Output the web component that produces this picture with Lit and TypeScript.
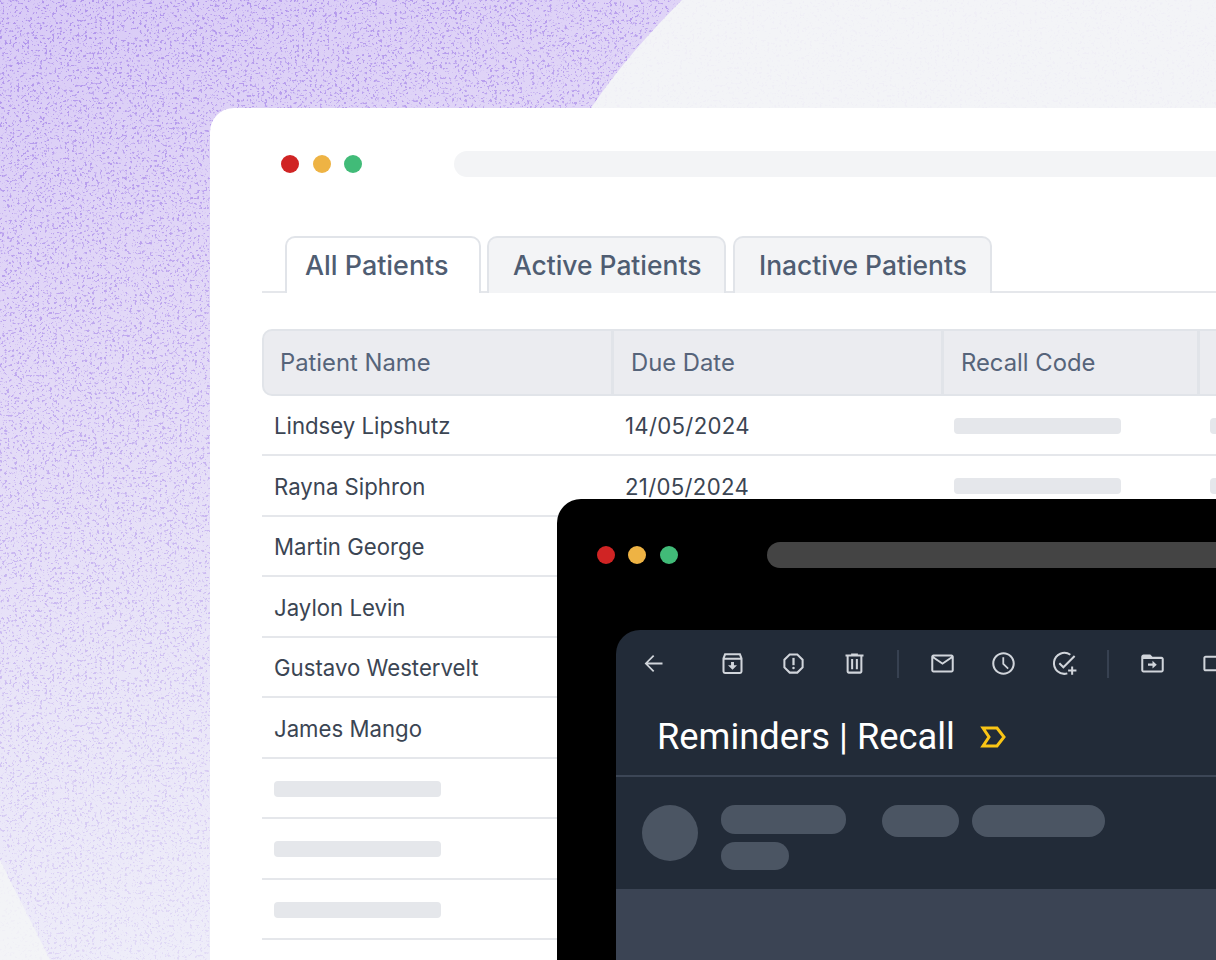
import { LitElement, html, css, svg } from "lit";
import { customElement } from "lit/decorators.js";

const BLOB = "M0 0H682C650 32 618 68 591 108L400 400V960H50C33 925 16 893 0 860Z";

const ICONS: Record<string, unknown> = {
  back: svg`<path d="M20 11.2H7.1l5.6-5.6L11.6 4.5 4.1 12l7.5 7.5 1.1-1.1-5.6-5.6H20z"/>`,
  archive: svg`<path class="st" d="M4 7.5 5.4 3.8h13.2L20 7.5v11.7c0 .7-.6 1.3-1.3 1.3H5.3c-.7 0-1.3-.6-1.3-1.3zM4 7.8h16"/><path d="M12 17.6 8 13.6h2.7v-3h2.6v3H16z"/>`,
  report: svg`<path d="M8.27 3 3 8.27v7.46L8.27 21h7.46L21 15.73V8.27L15.73 3H8.27zM19.2 15 15 19.2H9L4.8 15V9L9 4.8h6L19.2 9v6z"/><path d="M11 7h2v6.5h-2z"/><circle cx="12" cy="16" r="1.1"/>`,
  trash: svg`<path d="M15 4V3H9v1H4v1.8h1V19c0 1.1.9 2 2 2h10c1.1 0 2-.9 2-2V5.8h1V4h-5zm2.2 15c0 .1-.1.2-.2.2H7c-.1 0-.2-.1-.2-.2V5.8h10.4V19z"/><path d="M9 8h1.800v9H9zm4.200 0H15v9h-1.800z"/>`,
  mail: svg`<path d="M20 4H4c-1.100 0-2 .9-2 2v12c0 1.100.9 2 2 2h16c1.100 0 2-.9 2-2V6c0-1.100-.9-2-2-2zm.2 14c0 .1-.1.2-.2.2H4c-.1 0-.2-.1-.2-.2V7.500l8.200 5.600 8.200-5.600V18zM12 11 4.200 5.800h15.600L12 11z"/>`,
  clock: svg`<path d="M11.990 2C6.470 2 2 6.480 2 12s4.470 10 9.990 10C17.520 22 22 17.520 22 12S17.520 2 11.990 2zM12 20.200c-4.520 0-8.200-3.680-8.200-8.200S7.480 3.800 12 3.800s8.200 3.680 8.200 8.200-3.680 8.200-8.200 8.200z"/><path d="M12.600 6.500H11v6.200l4.600 4.400 1.100-1.100-4.100-3.900z"/>`,
  task: svg`<path class="st" d="M17.200 4.200A9.300 9.300 0 1 0 14.500 20.800M7.400 11.800l3.600 3.600L21 5.400M18.800 14.600v7.400M15.200 18.300h7.400"/>`,
  move: svg`<path d="M20 6h-8l-2-2H4c-1.100 0-1.990.9-1.990 2L2 18c0 1.100.9 2 2 2h16c1.100 0 2-.9 2-2V8c0-1.100-.9-2-2-2zm.2 12c0 .1-.1.2-.2.2H4c-.1 0-.2-.1-.2-.2V8h16.400v10z"/><path d="M12 14H8v-2h4V9.500l3.800 3.500-3.800 3.500z"/>`,
  label: svg`<path d="M17.630 5.840C17.270 5.330 16.670 5 16 5L5 5.010C3.900 5.010 3 5.900 3 7v10c0 1.100.9 1.990 2 1.990L16 19c.67 0 1.270-.33 1.630-.84L22 12l-4.370-6.160zM16 17.200H5c-.1 0-.2-.1-.2-.2V7c0-.1.1-.2.2-.2h11l3.700 5.200-3.700 5.200z"/>`,
};

const icon = (name: string) =>
  html`<svg class="ico" viewBox="0 0 24 24" aria-hidden="true">${ICONS[name]}</svg>`;

const PATIENTS = [
  ["Lindsey Lipshutz", "14/05/2024"],
  ["Rayna Siphron", "21/05/2024"],
  ["Martin George", ""],
  ["Jaylon Levin", ""],
  ["Gustavo Westervelt", ""],
  ["James Mango", ""],
  ["", ""],
  ["", ""],
  ["", ""],
];

@customElement("app-root")
export class AppRoot extends LitElement {
  static styles = css`
    :host {
      display: block;
      position: relative;
      width: 1216px;
      height: 960px;
      overflow: hidden;
      background: #f3f4f7;
      font-family: Inter, "Liberation Sans", sans-serif;
    }
    .bg { position: absolute; inset: 0; width: 1216px; height: 960px; display: block; }

    .win { position: absolute; box-sizing: border-box; }
    .light {
      left: 210px; top: 108px; width: 1100px; height: 900px;
      background: #fff; border-radius: 24px;
      padding: 43px 0 0 52px;
    }
    .dark {
      left: 557px; top: 499px; width: 800px; height: 520px;
      background: #000; border-radius: 24px;
      padding: 43px 0 0 59px;
    }

    .chrome { display: flex; align-items: center; height: 26px; }
    .dots { display: flex; gap: 13.5px; }
    .dot { width: 18px; height: 18px; border-radius: 50%; }
    .r { background: #d02424; }
    .y { background: #eeb344; }
    .g { background: #41bb78; }
    .addr { flex: 1; height: 26px; border-radius: 13px 0 0 13px; }
    .light .dots { margin-left: 19px; }
    .light .addr { margin-left: 91.5px; background: #f3f4f6; }
    .dark .dots { margin-left: -19.5px; }
    .dark .addr { margin-left: 89.5px; background: #444; }

    .tabs {
      display: flex; height: 57px; box-sizing: border-box;
      margin-top: 59px; padding-left: 23px; border-bottom: 2px solid #e5e7eb;
    }
    .tab {
      box-sizing: border-box; height: 57px; padding: 0 0 2px 24px; flex: none;
      display: flex; align-items: center;
      font-size: 26.4px; font-weight: 500; color: #4f5d72;
      background: #f3f4f6; border: 2px solid #e1e4e9; border-bottom: none;
      border-radius: 10px 10px 0 0;
    }
    .tab.on { background: #fff; padding-left: 18px; font-size: 26.9px; width: 196px; }
    .tab.t2 { width: 239px; margin-left: 6px; }
    .tab.t3 { width: 259px; margin-left: 7px; }

    .thead {
      display: flex; height: 66.5px; box-sizing: border-box; margin-top: 36px;
      background: #ebecf0; border: 2px solid #e1e4e9; border-radius: 10px 0 0 10px;
      font-size: 23.8px; font-weight: 400; color: #56647a;
    }
    .th {
      box-sizing: border-box; display: flex; align-items: center; flex: none;
      padding-left: 16px; border-right: 3px solid #e1e4e9;
    }
    .th.c1 { width: 350px; }
    .th.c2 { width: 330px; padding-left: 17px; }
    .th.c3 { width: 256px; padding-left: 17px; }

    .row {
      display: flex; align-items: center; height: 60.5px; box-sizing: border-box;
      padding-top: 2px; border-bottom: 2px solid #e5e7eb;
      font-size: 22.2px; color: #3b4553;
    }
    .td { box-sizing: border-box; padding-left: 12px; flex: none; }
    .td.c1 { width: 350px; }
    .td.c2 { width: 330px; padding-left: 13px; letter-spacing: 0.3px; }
    .td.c3 { width: 256px; }
    .sk { display: block; width: 167px; height: 16px; border-radius: 4px; background: #e5e7eb; }

    .panel {
      margin-top: 62px; background: #222b38; border-radius: 24px 0 0 0; height: 400px;
    }
    .tools { display: flex; align-items: center; height: 67px; padding-left: 24px; margin-bottom: 1px; }
    .ico { width: 27px; height: 27px; fill: #d1d5db; flex: none; display: block; }
    .ico .st { fill: none; stroke: #d1d5db; stroke-width: 1.8; }
    .tool-group { display: flex; gap: 34px; }
    .tool-group.first { margin-left: 52px; }
    .sep { width: 2px; height: 28px; background: #374151; margin: 0 30px 0 29px; flex: none; }

    .title {
      display: flex; align-items: center; height: 79px; box-sizing: border-box;
      padding: 0 0 0 41px; border-bottom: 2px solid #3c4656;
      font-family: Roboto, sans-serif; font-size: 36.3px; font-weight: 400; color: #fff;
    }
    .mark { width: 26px; height: 22px; margin-left: 25px; fill: none; stroke: #fac515; stroke-width: 3; }

    .sender {
      display: flex; height: 112px; box-sizing: border-box; padding: 28px 0 0 26px;
    }
    .avatar { width: 56px; height: 56px; border-radius: 50%; background: #4b5563; flex: none; }
    .names { display: flex; flex-direction: column; gap: 8px; margin-left: 23px; }
    .pill { display: block; background: #4b5563; border-radius: 14px; }
    .n1 { width: 125px; height: 29px; }
    .n2 { width: 68px; height: 28px; }
    .metas { display: flex; gap: 13px; margin-left: 36px; }
    .m1 { width: 77px; height: 32px; border-radius: 16px; }
    .m2 { width: 133px; height: 32px; border-radius: 16px; }
    .body { height: 120px; background: #3b4454; }
  `;

  private background() {
    return html`<svg class="bg" viewBox="0 0 1216 960" aria-hidden="true">
      <defs>
        <linearGradient id="wash" x1="0" y1="0" x2="0.25" y2="1">
          <stop offset="0" stop-color="#d8caf6"/>
          <stop offset="0.35" stop-color="#e2d8f7"/>
          <stop offset="0.7" stop-color="#e9e5f8"/>
          <stop offset="1" stop-color="#eeedf9"/>
        </linearGradient>
        <linearGradient id="fade" x1="0" y1="0" x2="0.25" y2="1">
          <stop offset="0" stop-color="#fff" stop-opacity="1"/>
          <stop offset="0.5" stop-color="#fff" stop-opacity="0.62"/>
          <stop offset="1" stop-color="#fff" stop-opacity="0.2"/>
        </linearGradient>
        <filter id="grain" x="0" y="0" width="100%" height="100%" color-interpolation-filters="sRGB">
          <feTurbulence type="fractalNoise" baseFrequency="0.4" numOctaves="2" seed="11"/>
          <feColorMatrix type="matrix" values="0 0 0 0 0.69  0 0 0 0 0.58  0 0 0 0 0.92  2 2 0 0 -2.22"/>
          <feComponentTransfer><feFuncA type="linear" slope="3" intercept="0"/></feComponentTransfer>
        </filter>
        <mask id="fadeMask"><path d=${BLOB} fill="url(#fade)"/></mask>
      </defs>
      <rect width="1216" height="960" filter="url(#grain)" opacity="0.04"/>
      <path d=${BLOB} fill="url(#wash)"/>
      <rect width="1216" height="960" filter="url(#grain)" mask="url(#fadeMask)"/>
    </svg>`;
  }

  render() {
    return html`
      ${this.background()}
      <section class="win light">
        <div class="chrome">
          <div class="dots"><i class="dot r"></i><i class="dot y"></i><i class="dot g"></i></div>
          <div class="addr"></div>
        </div>
        <div class="tabs">
          <div class="tab on">All Patients</div>
          <div class="tab t2">Active Patients</div>
          <div class="tab t3">Inactive Patients</div>
        </div>
        <div class="thead">
          <div class="th c1">Patient Name</div>
          <div class="th c2">Due Date</div>
          <div class="th c3">Recall Code</div>
        </div>
        ${PATIENTS.map(
          ([name, date]) => html`<div class="row">
            <div class="td c1">${name || html`<span class="sk"></span>`}</div>
            <div class="td c2">${date}</div>
            <div class="td c3">${date ? html`<span class="sk"></span>` : ""}</div>
            <div class="td">${date ? html`<span class="sk"></span>` : ""}</div>
          </div>`
        )}
      </section>
      <section class="win dark">
        <div class="chrome">
          <div class="dots"><i class="dot r"></i><i class="dot y"></i><i class="dot g"></i></div>
          <div class="addr"></div>
        </div>
        <div class="panel">
          <div class="tools">
            ${icon("back")}
            <div class="tool-group first">${icon("archive")}${icon("report")}${icon("trash")}</div>
            <i class="sep"></i>
            <div class="tool-group">${icon("mail")}${icon("clock")}${icon("task")}</div>
            <i class="sep"></i>
            <div class="tool-group">${icon("move")}${icon("label")}</div>
          </div>
          <div class="title">
            Reminders | Recall
            <svg class="mark" viewBox="0 0 26 22" aria-hidden="true"><path d="M3 2h14l7 9-7 9H3l6-9z"/></svg>
          </div>
          <div class="sender">
            <div class="avatar"></div>
            <div class="names"><span class="pill n1"></span><span class="pill n2"></span></div>
            <div class="metas"><span class="pill m1"></span><span class="pill m2"></span></div>
          </div>
          <div class="body"></div>
        </div>
      </section>
    `;
  }
}
